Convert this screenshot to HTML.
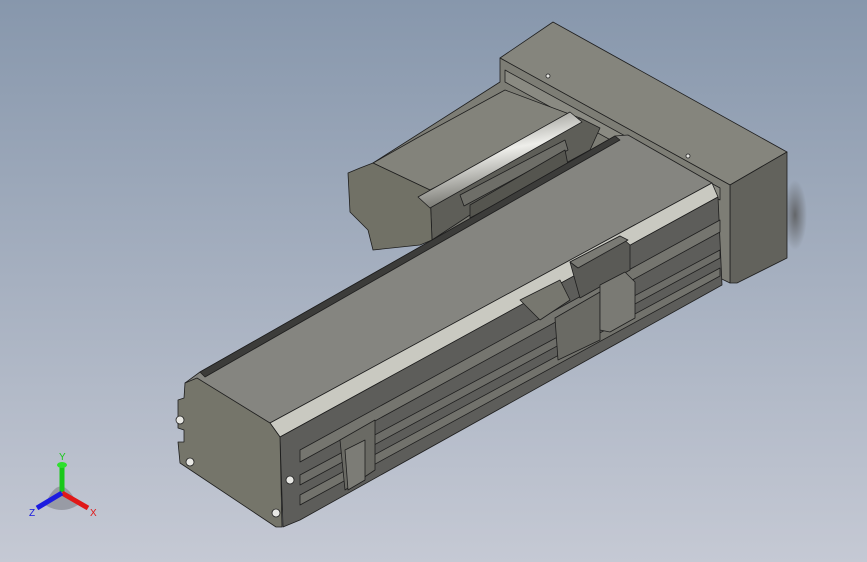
<!DOCTYPE html>
<html><head><meta charset="utf-8"><style>
html,body{margin:0;padding:0;width:867px;height:562px;overflow:hidden}
svg{display:block}
</style></head><body>
<svg width="867" height="562" viewBox="0 0 867 562" xmlns="http://www.w3.org/2000/svg">
<defs>
<linearGradient id="bg" x1="0" y1="0" x2="0" y2="1">
<stop offset="0" stop-color="#8797ac"/><stop offset="1" stop-color="#c5c9d4"/>
</linearGradient>
<linearGradient id="rod" x1="0" y1="0" x2="0.3" y2="1">
<stop offset="0" stop-color="#6a6a64"/><stop offset="0.5" stop-color="#eeeeea"/><stop offset="1" stop-color="#6a6a64"/>
</linearGradient>
<radialGradient id="sh" cx="0.5" cy="0.5" r="0.5"><stop offset="0" stop-color="#555" stop-opacity="0.8"/><stop offset="1" stop-color="#555" stop-opacity="0"/></radialGradient>
</defs>
<rect width="867" height="562" fill="url(#bg)"/>
<ellipse cx="795" cy="215" rx="12" ry="35" fill="url(#sh)"/>
<g stroke="#1e1e1e" stroke-width="0.8" stroke-linejoin="round">
<!-- box -->
<polygon points="500,58 553,22 787,152 730,185" fill="#85857d"/>
<polygon points="730,185 787,152 787,258 737,283 730,283" fill="#62625c"/>
<polygon points="500,58 730,185 730,283 600,220 430,240 373,163 500,82" fill="#7d7d75"/>
<polygon points="505,70 720,188 720,200 505,82" fill="#8a8a82"/>
<!-- motor -->
<polygon points="373,163 417,138 505,90 580,118 470,170 430,190" fill="#83837b"/>
<polygon points="430,190 470,170 580,118 600,128 590,150 470,215 432,240" fill="#5e5e58"/>
<polygon points="348,173 360,168 373,163 430,190 432,240 420,245 373,250 368,230 350,212" fill="#717166"/>
<polygon points="418,197 570,112 582,122 430,208" fill="url(#rod)"/>
<polygon points="460,195 565,140 568,150 464,206" fill="#6e6e68"/>
<polygon points="470,205 565,150 568,165 470,218" fill="#55554f"/>
<!-- beam -->
<polygon points="185,383 200,372 615,136 628,135 712,183 270,423" fill="#858580"/>
<polygon points="200,372 615,136 620,140 205,377" fill="#3c3c3a"/>
<polygon points="270,423 712,183 718,197 280,437" fill="#c9c9c1"/>
<polygon points="280,437 718,197 722,285 300,520 283,527" fill="#5d5d5a"/>
<polygon points="300,450 720,220 720,232 300,462" fill="#75756f"/>
<polygon points="300,475 720,250 720,258 300,485" fill="#6d6d68"/>
<polygon points="300,495 720,268 720,276 300,505" fill="#72726c"/>
<!-- end face -->
<polygon points="185,383 197,378 270,423 280,437 282,527 276,527 180,463 178,442 184,442 184,430 178,428 178,400 184,398" fill="#75756a"/>
<!-- carriage -->
<polygon points="570,262 620,236 630,245 630,270 580,298" fill="#5a5a56"/>
<polygon points="570,262 620,236 628,240 578,268" fill="#7a7a74"/>
<polygon points="555,318 600,292 600,340 558,360" fill="#6a6a64"/>
<polygon points="600,285 625,272 635,282 635,318 610,332 600,330" fill="#7a7a74"/>
<polygon points="520,300 560,280 570,300 540,320" fill="#77776f"/>
<polygon points="340,440 375,420 375,470 345,490" fill="#6a6a64"/>
<polygon points="345,450 365,440 365,480 348,490" fill="#7c7c76"/>
</g>
<g fill="#e8e8e4" stroke="#222" stroke-width="0.8">
<circle cx="180" cy="420" r="4"/><circle cx="190" cy="462" r="4"/><circle cx="290" cy="480" r="4"/><circle cx="276" cy="513" r="4"/>
<circle cx="548" cy="76" r="2"/><circle cx="688" cy="156" r="2"/>
</g>
<!-- triad -->
<g>
<path d="M45 505 Q60 468 78 505 Q62 515 45 505Z" fill="#7e8088" opacity="0.6"/>
<line x1="62" y1="492" x2="62" y2="465" stroke="#19c819" stroke-width="5"/>
<ellipse cx="62" cy="465" rx="5" ry="3" fill="#2ee02e"/>
<line x1="62" y1="493" x2="88" y2="508" stroke="#e01818" stroke-width="5"/>
<line x1="62" y1="493" x2="37" y2="508" stroke="#1c1ce0" stroke-width="5"/>
<text x="59" y="460" font-family="Liberation Sans, sans-serif" font-size="10" fill="#18c818">Y</text>
<text x="90" y="516" font-family="Liberation Sans, sans-serif" font-size="10" fill="#e01818">X</text>
<text x="29" y="516" font-family="Liberation Sans, sans-serif" font-size="10" fill="#1818e0">Z</text>
</g>
</svg>
</body></html>
